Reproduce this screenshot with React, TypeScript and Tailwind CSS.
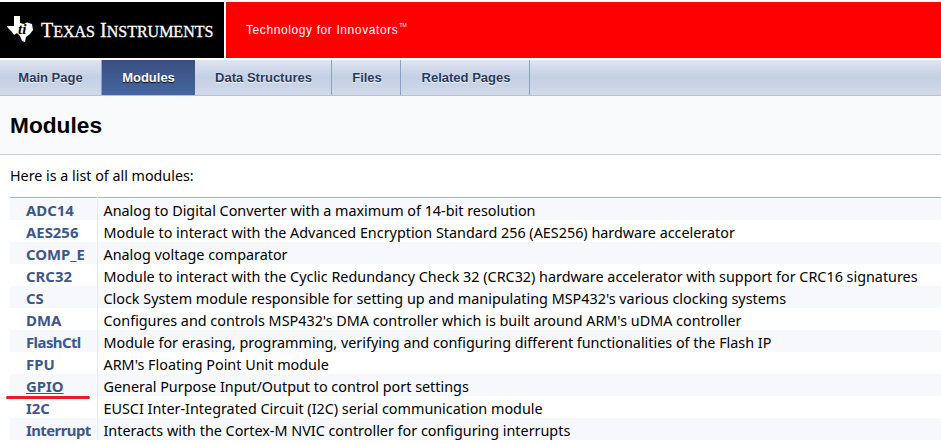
const modules = [
  ['ADC14', 'Analog to Digital Converter with a maximum of 14-bit resolution'],
  ['AES256', 'Module to interact with the Advanced Encryption Standard 256 (AES256) hardware accelerator'],
  ['COMP_E', 'Analog voltage comparator'],
  ['CRC32', 'Module to interact with the Cyclic Redundancy Check 32 (CRC32) hardware accelerator with support for CRC16 signatures'],
  ['CS', "Clock System module responsible for setting up and manipulating MSP432's various clocking systems"],
  ['DMA', "Configures and controls MSP432's DMA controller which is built around ARM's uDMA controller"],
  ['FlashCtl', 'Module for erasing, programming, verifying and configuring different functionalities of the Flash IP'],
  ['FPU', "ARM's Floating Point Unit module"],
  ['GPIO', 'General Purpose Input/Output to control port settings'],
  ['I2C', 'EUSCI Inter-Integrated Circuit (I2C) serial communication module'],
  ['Interrupt', 'Interacts with the Cortex-M NVIC controller for configuring interrupts'],
]

const tabs = [
  { label: 'Main Page', width: 'w-[102px]' },
  { label: 'Modules', width: 'w-[93px]', active: true },
  { label: 'Data Structures', width: 'w-[137px] pl-[1px]' },
  { label: 'Files', width: 'w-[69px] pl-[2px]' },
  { label: 'Related Pages', width: 'w-[129px] pl-[2px]' },
]

function TiLogo() {
  return (
    <svg width="27" height="28" viewBox="0 0 27 28" className="shrink-0 -mt-[3px]">
      <path
        fill="#fff"
        d="M7 1H13V8L17 9L20 7.5L25 9L26 15L23 19L19 22L18 27L15 26L13 21L10 18L7 20L5 17L1 13L0 11H7Z"
      />
      <text x="11" y="19" fill="#000" fontSize="15" fontStyle="italic" fontWeight="700" fontFamily="'Liberation Serif', serif">ti</text>
    </svg>
  )
}

export default function App() {
  return (
    <div className="relative w-[941px] h-[444px] overflow-hidden bg-white font-['Noto_Sans',sans-serif] text-[14.37px] text-black">
      <div className="flex h-[56px] mt-[2px] pt-0">
        <div className="w-[224px] bg-black flex items-center pl-[7px] gap-[7px] text-white font-['Liberation_Serif',serif]">
          <TiLogo />
          <span className="text-[20px] leading-none whitespace-nowrap [-webkit-text-stroke:0.3px_#fff]">
            T<span className="text-[16px]">EXAS</span> I<span className="text-[16px]">NSTRUMENTS</span>
          </span>
        </div>
        <div className="flex-1 ml-[2px] bg-[#ff0000] flex items-center pl-[20px] text-white font-['Liberation_Sans',sans-serif] text-[12px] tracking-[0.6px]">
          <span>Technology for Innovators</span>
          <span className="text-[5px] ml-[1px] -mt-[9px] tracking-normal">TM</span>
        </div>
      </div>

      <nav className="flex h-[36px] mt-[2px] bg-gradient-to-b from-[#dfe5f1] via-[#c4cfe5] to-[#d2daea] border-b border-[#b4c1dc] font-['Liberation_Sans',sans-serif] text-[13px] font-bold">
        {tabs.map((t) => (
          <div
            key={t.label}
            className={
              t.active
                ? `${t.width} flex items-center justify-center bg-gradient-to-b from-[#3a4f80] to-[#4665a2] text-white [text-shadow:0_1px_1px_#000]`
                : `${t.width} flex items-center justify-center border-r border-[#8ba0cc] text-[#283a5d] [text-shadow:0_1px_1px_#ffffffe6]`
            }
          >
            {t.label}
          </div>
        ))}
      </nav>

      <div className="h-[59px] bg-[#f9fafc] border-b border-[#c4cfe5] flex items-center pl-[10px]">
        <h1 className="text-[22.7px] font-bold font-['Liberation_Sans',sans-serif] leading-none">Modules</h1>
      </div>

      <p className="mt-[11px] pl-[10px] h-[20px] leading-[20px] text-[14.3px]">Here is a list of all modules:</p>

      <table className="ml-[10px] mt-[11px] w-[931px] border-t border-[#a3b4d7] border-collapse">
        <tbody>
          {modules.map(([name, desc], i) => (
            <tr key={name} className={i % 2 === 0 ? 'bg-[#f7f8fb]' : 'bg-white'}>
              <td className="h-[22px] p-0 pl-[16px] pt-[3px] w-[87px] border-r border-[#e8ecf4] font-bold text-[14.9px] text-[#3d578c] leading-none">
                <span
                  className={
                    name === 'GPIO'
                      ? 'underline'
                      : name === 'Interrupt' || name === 'FlashCtl'
                        ? 'tracking-[-0.55px]'
                        : ''
                  }
                >
                  {name}
                </span>
              </td>
              <td className="h-[22px] p-0 pl-[6px] pt-[5px] leading-none whitespace-nowrap">{desc}</td>
            </tr>
          ))}
        </tbody>
      </table>

      {/* red marker stroke drawn over the GPIO row */}
      <div className="absolute left-[6px] top-[396px] w-[84px] h-[3px] rounded-full bg-[#ed1c24]" />
    </div>
  )
}
